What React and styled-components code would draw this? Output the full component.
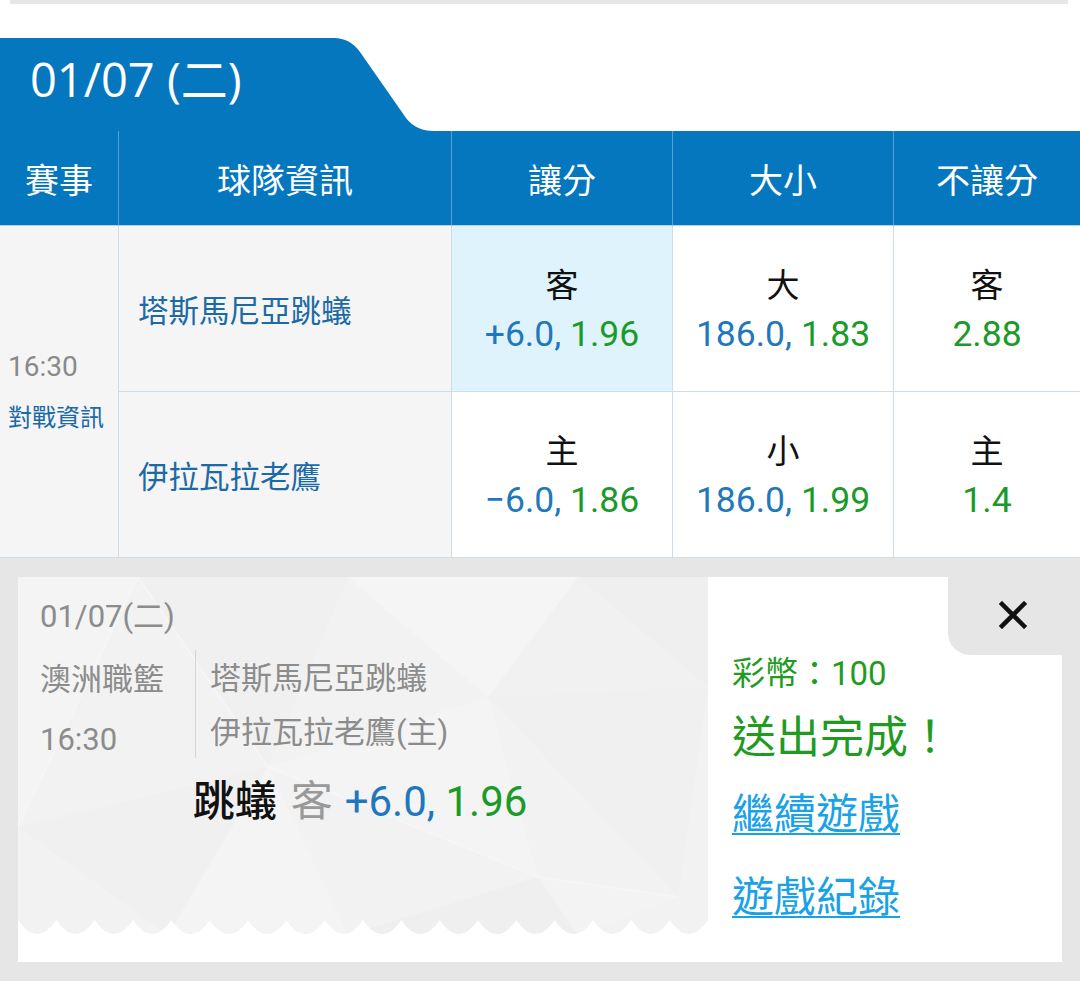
import React from 'react';
import styled, { createGlobalStyle } from 'styled-components';

const GlobalStyle = createGlobalStyle`
  html, body { margin: 0; padding: 0; background: #ffffff; }
  body { font-family: Roboto, "Noto Sans CJK TC", sans-serif; }
  * { box-sizing: border-box; }
`;

const BLUE = '#0477bf';
const ODD_BLUE = '#1f78bd';
const ODD_GREEN = '#1a9a28';

const Page = styled.div`
  width: 1080px;
  min-height: 981px;
  display: flex;
  flex-direction: column;
  background: #ffffff;
`;

const TopStrip = styled.div`
  height: 4px;
  margin: 0 12px 0 10px;
  background: #e7e7e7;
`;

const TabRow = styled.div`
  display: flex;
  margin-top: 34px;
  height: 93px;
`;

const Tab = styled.div`
  width: 330px;
  background: ${BLUE};
  color: #ffffff;
  font-family: "Open Sans", "Noto Sans CJK TC", sans-serif;
  font-size: 47px;
  line-height: 56px;
  padding: 13px 0 0 30px;
  white-space: nowrap;
`;

const Slope = styled.svg`
  display: block;
  flex: none;
`;

const Table = styled.div`
  display: grid;
  grid-template-columns: 119px 333px 221px 221px 1fr;
  grid-template-rows: 95px 166px 166px;
`;

const HeadCell = styled.div`
  background: ${BLUE};
  color: #ffffff;
  font-size: 34px;
  display: flex;
  align-items: center;
  justify-content: center;
  border-right: ${(p) => (p.$last ? 'none' : '1px solid #5a9fd4')};
  border-bottom: 1px solid #b7d2ea;
`;

const EventCell = styled.div`
  grid-row: span 2;
  background: #f5f5f5;
  border-right: 1px solid #cfdde8;
  border-bottom: 1px solid #cfdde8;
  display: flex;
  flex-direction: column;
  justify-content: center;
  padding: 0 0 0 8px;
  gap: 21px;
`;

const EventTime = styled.div`
  font-size: 28px;
  line-height: 32px;
  color: #8a8a8a;
`;

const EventLink = styled.div`
  font-size: 24px;
  line-height: 28px;
  color: #1b6aa5;
  white-space: nowrap;
`;

const TeamCell = styled.div`
  background: #f5f5f5;
  border-right: 1px solid #cfdde8;
  border-bottom: 1px solid #cfdde8;
  display: flex;
  align-items: center;
  padding: 0 0 0 19px;
  font-size: 30.5px;
  color: #1b6aa5;
`;

const OddsCell = styled.div`
  background: ${(p) => (p.$active ? '#dff3fc' : '#ffffff')};
  border-right: ${(p) => (p.$last ? 'none' : '1px solid #cfdde8')};
  border-bottom: 1px solid #cfdde8;
  display: flex;
  flex-direction: column;
  align-items: center;
  justify-content: center;
  gap: 8px;
  padding-top: 2px;
`;

const OddsLabel = styled.div`
  font-size: 33px;
  line-height: 40px;
  color: #111111;
`;

const OddsValue = styled.div`
  font-size: 35.5px;
  line-height: 40px;
  white-space: nowrap;
`;

const Num = styled.span`
  color: ${(p) => (p.$green ? ODD_GREEN : ODD_BLUE)};
`;

const Bottom = styled.div`
  flex: 1;
  background: #e6e6e6;
  padding: 19px 18px 19px 18px;
`;

const Ticket = styled.div`
  display: flex;
  height: 385px;
  background: #ffffff;
`;

const Stub = styled.div`
  position: relative;
  width: 690px;
  height: 358px;
  display: flex;
  flex-direction: column;
`;

const StubArt = styled.svg`
  position: absolute;
  left: 0;
  top: 0;
  z-index: 0;
`;

const StubContent = styled.div`
  position: relative;
  z-index: 1;
  display: flex;
  flex-direction: column;
  padding-top: 22px;
`;

const Muted = styled.div`
  font-size: 31px;
  line-height: 36px;
  color: #8c8c8c;
  white-space: nowrap;
`;

const DateLine = styled(Muted)`
  margin-left: 22px;
`;

const InfoRow = styled.div`
  display: flex;
  margin: 15px 0 0 22px;
  height: 108px;
`;

const InfoLeft = styled.div`
  width: 155px;
  display: flex;
  flex-direction: column;
  padding-top: 12px;
  gap: 24px;
`;

const InfoRight = styled.div`
  border-left: 1px solid #d6d6d6;
  padding: 11px 0 0 14px;
  display: flex;
  flex-direction: column;
  gap: 18px;
`;

const BetLine = styled.div`
  margin-top: 19px;
  padding-right: 6px;
  text-align: center;
  font-size: 42px;
  line-height: 50px;
  white-space: nowrap;
`;

const BetTeam = styled.span`
  color: #111111;
  font-weight: 500;
`;

const BetSide = styled.span`
  color: #999999;
  margin: 0 12px 0 14px;
`;

const Side = styled.div`
  flex: 1;
  display: flex;
  flex-direction: column;
`;

const CloseTab = styled.div`
  align-self: flex-end;
  width: 114px;
  height: 78px;
  background: #e6e6e6;
  border-bottom-left-radius: 22px;
  display: flex;
  align-items: center;
  justify-content: center;
  padding: 0 0 3px 16px;
`;

const SideBody = styled.div`
  display: flex;
  flex-direction: column;
  padding-left: 24px;
`;

const Coins = styled.div`
  margin-top: 1px;
  font-size: 33px;
  line-height: 36px;
  color: #1f9b1f;
`;

const Done = styled.div`
  margin-top: 20px;
  font-size: 44px;
  line-height: 52px;
  color: #1f9b1f;
`;

const LinkText = styled.a`
  display: block;
  margin-top: ${(p) => p.$gap}px;
  font-size: 42px;
  line-height: 48px;
  color: #1aa2e6;
  text-decoration: underline;
  text-decoration-thickness: 2px;
  text-underline-offset: 4px;
  cursor: pointer;
  align-self: flex-start;
`;

const rows = [
  {
    team: '塔斯馬尼亞跳蟻',
    odds: [
      { label: '客', line: '+6.0', price: '1.96', active: true },
      { label: '大', line: '186.0', price: '1.83' },
      { label: '客', price: '2.88' },
    ],
  },
  {
    team: '伊拉瓦拉老鷹',
    odds: [
      { label: '主', line: '−6.0', price: '1.86' },
      { label: '小', line: '186.0', price: '1.99' },
      { label: '主', price: '1.4' },
    ],
  },
];

const heads = ['賽事', '球隊資訊', '讓分', '大小', '不讓分'];

function stubPath() {
  const W = 690;
  const P = W / 18;
  let d = `M0,0 H${W} V343`;
  for (let k = 17; k >= 0; k--) {
    const xm = (k + 0.5) * P;
    const x1 = k * P;
    d += ` Q${xm.toFixed(2)},371 ${x1.toFixed(2)},343`;
  }
  return d + ' Z';
}

function StubBackground() {
  const d = stubPath();
  return (
    <StubArt width="690" height="358" viewBox="0 0 690 358">
      <defs>
        <clipPath id="stubClip">
          <path d={d} />
        </clipPath>
      </defs>
      <path d={d} fill="#f2f2f2" />
      <g clipPath="url(#stubClip)">
        <polygon points="0,0 120,0 0,250" fill="#f4f4f4" />
        <polygon points="120,0 330,0 250,190" fill="#f0f0f0" />
        <polygon points="330,0 560,0 470,120" fill="#f5f5f5" />
        <polygon points="560,0 690,0 690,110" fill="#efefef" />
        <polygon points="560,0 690,110 470,120" fill="#f1f1f1" />
        <polygon points="0,250 250,190 150,358" fill="#f0f0f0" />
        <polygon points="250,190 470,120 520,300" fill="#f4f4f4" />
        <polygon points="470,120 690,110 660,320" fill="#f0f0f0" />
        <polygon points="520,300 660,320 560,358" fill="#f3f3f3" />
        <polygon points="150,358 250,190 330,358" fill="#f4f4f4" />
        <polygon points="330,358 520,300 560,358" fill="#efefef" />
        <polyline points="0,250 120,0 250,190" fill="none" stroke="#f6f6f6" strokeWidth="1.5" />
        <polyline points="250,190 520,300 660,320" fill="none" stroke="#f6f6f6" strokeWidth="1.5" />
      </g>
    </StubArt>
  );
}

function CloseIcon() {
  return (
    <svg width="28" height="28" viewBox="0 0 28 28">
      <path d="M3 3 L25 25 M25 3 L3 25" stroke="#111" strokeWidth="4.5" strokeLinecap="square" />
    </svg>
  );
}

export default function App() {
  return (
    <Page>
      <GlobalStyle />
      <TopStrip />
      <TabRow>
        <Tab>01/07 (二)</Tab>
        <Slope width="104" height="93" viewBox="0 0 104 93">
          <path d="M0,0 L4,0 Q20,0 30,14 L76,80 Q86,93 104,93 L0,93 Z" fill={BLUE} />
        </Slope>
      </TabRow>
      <Table>
        {heads.map((h, i) => (
          <HeadCell key={h} $last={i === heads.length - 1}>
            {h}
          </HeadCell>
        ))}
        <EventCell>
          <EventTime>16:30</EventTime>
          <EventLink>對戰資訊</EventLink>
        </EventCell>
        {rows.map((r) => (
          <React.Fragment key={r.team}>
            <TeamCell>{r.team}</TeamCell>
            {r.odds.map((o, i) => (
              <OddsCell key={i} $active={o.active} $last={i === r.odds.length - 1}>
                <OddsLabel>{o.label}</OddsLabel>
                <OddsValue>
                  {o.line && <Num>{o.line}, </Num>}
                  <Num $green>{o.price}</Num>
                </OddsValue>
              </OddsCell>
            ))}
          </React.Fragment>
        ))}
      </Table>
      <Bottom>
        <Ticket>
          <Stub>
            <StubBackground />
            <StubContent>
              <DateLine>01/07(二)</DateLine>
              <InfoRow>
                <InfoLeft>
                  <Muted>澳洲職籃</Muted>
                  <Muted>16:30</Muted>
                </InfoLeft>
                <InfoRight>
                  <Muted>塔斯馬尼亞跳蟻</Muted>
                  <Muted>伊拉瓦拉老鷹(主)</Muted>
                </InfoRight>
              </InfoRow>
              <BetLine>
                <BetTeam>跳蟻</BetTeam>
                <BetSide>客</BetSide>
                <Num>+6.0, </Num>
                <Num $green>1.96</Num>
              </BetLine>
            </StubContent>
          </Stub>
          <Side>
            <CloseTab>
              <CloseIcon />
            </CloseTab>
            <SideBody>
              <Coins>彩幣：100</Coins>
              <Done>送出完成！</Done>
              <LinkText $gap={27}>繼續遊戲</LinkText>
              <LinkText $gap={35}>遊戲紀錄</LinkText>
            </SideBody>
          </Side>
        </Ticket>
      </Bottom>
    </Page>
  );
}
